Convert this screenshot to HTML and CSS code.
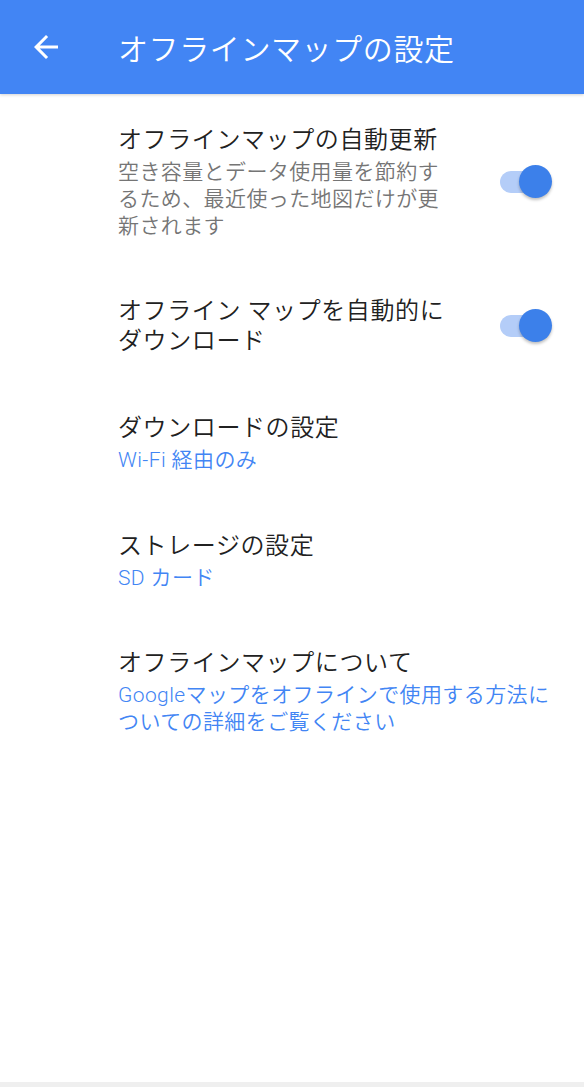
FILE: index.html
```html
<!DOCTYPE html>
<html lang="ja">
<head>
<meta charset="utf-8">
<link rel="stylesheet" href="styles.css">
</head>
<body>
<div class="app">
  <header class="appbar">
    <span class="back">
      <svg width="36" height="36" viewBox="0 0 24 24"><path d="M20 11H7.83l5.59-5.59L12 4l-8 8 8 8 1.41-1.41L7.83 13H20v-2z" fill="#fff"/></svg>
    </span>
    <h1 class="title">オフラインマップの設定</h1>
  </header>
  <main class="list">
    <div class="item item-1">
      <div class="text">
        <div class="primary">オフラインマップの自動更新</div>
        <div class="secondary gray">空き容量とデータ使用量を節約するため、最近使った地図だけが更新されます</div>
      </div>
      <div class="switch"><span class="track"></span><span class="thumb"></span></div>
    </div>
    <div class="item item-2">
      <div class="text">
        <div class="primary two">オフライン マップを自動的にダウンロード</div>
      </div>
      <div class="switch"><span class="track"></span><span class="thumb"></span></div>
    </div>
    <div class="item item-3">
      <div class="text">
        <div class="primary">ダウンロードの設定</div>
        <div class="secondary blue">Wi-Fi 経由のみ</div>
      </div>
    </div>
    <div class="item item-4">
      <div class="text">
        <div class="primary">ストレージの設定</div>
        <div class="secondary blue">SD カード</div>
      </div>
    </div>
    <div class="item item-5">
      <div class="text">
        <div class="primary">オフラインマップについて</div>
        <div class="secondary blue wide">Googleマップをオフラインで使用する方法についての詳細をご覧ください</div>
      </div>
    </div>
  </main>
  <div class="bottom"></div>
</div>
</body>
</html>
```
FILE: styles.css
```css
html, body {
  margin: 0;
  padding: 0;
  background: #fff;
}
body {
  font-family: Roboto, "Noto Sans CJK JP", sans-serif;
}
.app {
  width: 584px;
  height: 1087px;
  display: flex;
  flex-direction: column;
  overflow: hidden;
}
.appbar {
  height: 94px;
  flex: none;
  background: #4285f4;
  display: flex;
  align-items: center;
  box-shadow: 0 1px 3px rgba(0,0,0,0.18);
  position: relative;
  z-index: 1;
}
.back {
  width: 36px;
  height: 36px;
  margin-left: 28px;
  display: flex;
}
.title {
  margin: 0 0 0 54px;
  font-weight: 350;
  font-size: 30px;
  color: #fff;
  letter-spacing: 0.6px;
}
.list {
  flex: 1;
  padding-top: 30px;
}
.item {
  display: flex;
  align-items: center;
  padding-left: 118px;
  padding-right: 32px;
}
.text {
  flex: 1;
}
.primary {
  font-size: 24px;
  font-weight: 350;
  line-height: 32px;
  color: #212121;
  letter-spacing: 0.6px;
}
.primary.two {
  width: 336px;
  line-height: 30px;
}
.secondary {
  font-size: 21px;
  font-weight: 350;
  line-height: 27px;
  margin-top: 3px;
  letter-spacing: 0.4px;
}
.gray {
  color: #757575;
  width: 330px;
}
.blue {
  color: #4285f4;
}
.wide {
  width: 445px;
}
.item-2 { margin-top: 56px; }
.item-3 { margin-top: 56px; }
.item-4 { margin-top: 56px; }
.item-5 { margin-top: 55px; }
.switch {
  position: relative;
  width: 52px;
  height: 34px;
  flex: none;
}
.track {
  position: absolute;
  left: 0;
  top: 6px;
  width: 46px;
  height: 22px;
  border-radius: 11px;
  background: #b4cdf8;
}
.thumb {
  position: absolute;
  right: 0;
  top: 0;
  width: 33px;
  height: 33px;
  border-radius: 50%;
  background: #3c80ea;
  box-shadow: 0 2px 3px rgba(0,0,0,0.25);
}
.bottom {
  height: 5px;
  flex: none;
  background: #efefef;
}
```
